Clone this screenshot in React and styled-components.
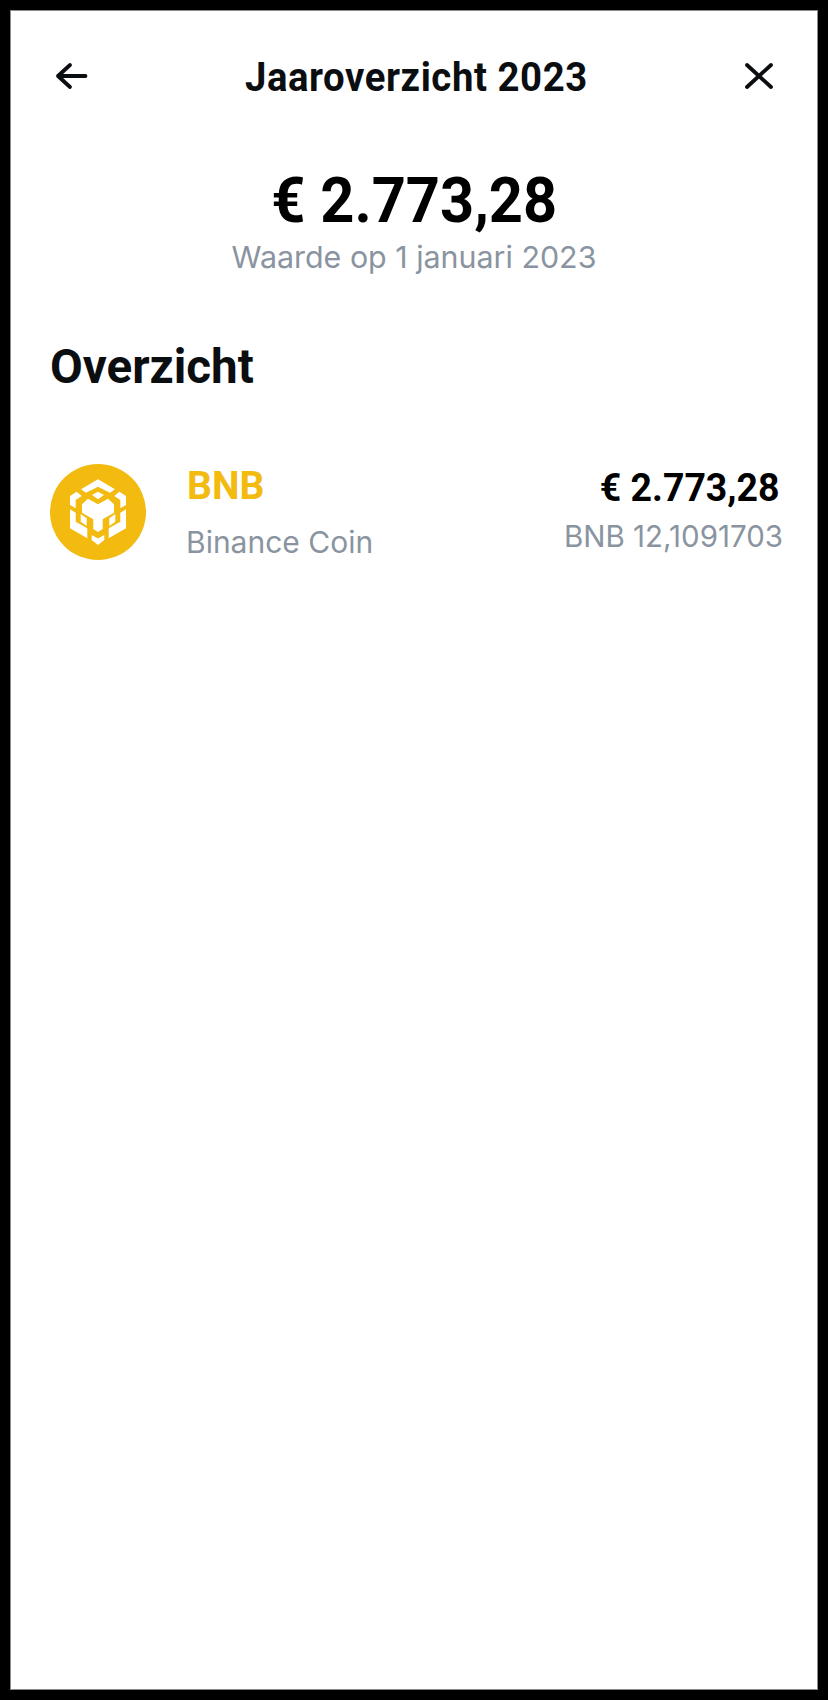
import React from 'react'
import styled, { createGlobalStyle } from 'styled-components'

const GlobalStyle = createGlobalStyle`
  html, body {
    margin: 0;
    padding: 0;
    background-color: black;
  }
`;

const Frame = styled.div`
  box-sizing: border-box;
  width: 828px;
  height: 1700px;
  background-color: black;
  padding: 10px;
`;

const Screen = styled.div`
  box-sizing: border-box;
  height: 100%;
  background-color: white;
  border: 1px solid #8c8c8c;
  padding: 0 34px 0 39px;
  font-family: Inter, sans-serif;
`;

const Header = styled.div`
  display: flex;
  align-items: center;
  justify-content: space-between;
  height: 56px;
  margin-top: 38px;
  padding: 0 4px;
`;

// the heading face in the screenshot is a narrow DIN, so Roboto gets squeezed a bit
const Heading = styled.div`
  font-family: Roboto, sans-serif;
  font-weight: 700;
  transform: scaleX(${(p) => p.$squeeze || 1});
  transform-origin: ${(p) => p.$origin || 'center'};
  white-space: nowrap;
`;

const HeaderTitle = styled(Heading)`
  font-size: 41px;
  letter-spacing: 0.6px;
  color: #0b0e11;
`;

const IconButton = styled.div`
  display: flex;
  width: 36px;
  height: 36px;
  align-items: center;
  justify-content: center;
`;

const Total = styled.div`
  display: flex;
  flex-direction: column;
  align-items: center;
  margin-top: 61px;
  padding-right: 5px;
`;

const TotalValue = styled(Heading)`
  font-size: 63px;
  line-height: 70px;
  color: black;
`;

const TotalLabel = styled.div`
  margin-top: 1px;
  font-size: 30.4px;
  line-height: 40px;
  color: #8a94a0;
`;

const SectionTitle = styled(Heading)`
  margin-top: 62px;
  font-size: 48px;
  line-height: 56px;
  color: #0b0e11;
`;

const CoinRow = styled.div`
  display: flex;
  align-items: center;
  margin-top: 67px;
`;

const CoinIcon = styled.div`
  width: 96px;
  height: 96px;
  flex-shrink: 0;
`;

const CoinInfo = styled.div`
  flex: 1;
  display: flex;
  flex-direction: column;
  gap: 15px;
  margin: 2px 0 0 40px;
`;

const CoinAmounts = styled.div`
  display: flex;
  flex-direction: column;
  align-items: flex-end;
  gap: 8px;
  margin-bottom: 3px;
`;

const CoinSymbol = styled(Heading)`
  padding-left: 1px;
  font-size: 39px;
  line-height: 44px;
  color: #f3ba0f;
`;

const CoinName = styled.div`
  font-size: 30px;
  line-height: 38px;
  color: #8a94a0;
`;

const CoinValue = styled(Heading)`
  padding-right: 4px;
  font-size: 38px;
  line-height: 44px;
  color: black;
`;

const CoinBalance = styled.div`
  font-size: 29.5px;
  line-height: 36px;
  color: #8a94a0;
`;

const BackIcon = () => (
  <svg width="36" height="36" viewBox="0 0 36 36" fill="none" stroke="#0b0e11" strokeWidth="3.8" strokeLinecap="round" strokeLinejoin="round">
    <path d="M31.500 17H4M16 6L4 17l12 11" />
  </svg>
)

const CloseIcon = () => (
  <svg width="36" height="36" viewBox="0 0 36 36" fill="none" stroke="#0b0e11" strokeWidth="3.8" strokeLinecap="round">
    <path d="M4 6l24 22M28 6L4 28" />
  </svg>
)

const BnbLogo = () => (
  <svg width="96" height="96" viewBox="0 0 96 96">
    <circle cx="48" cy="48" r="48" fill="#f3ba0f" />
    <g fill="white">
      <path d="M48 15.300L65 25.300 60 28.700 48 22.700 36 28.700 31 25.300z" />
      <path d="M48 27.700L54 31 48 35.300 42 31z" />
      <path d="M26.700 27.700L31.700 32 25.700 36V44.300L20 41V32z" />
      <path d="M69.300 27.700L64.300 32 70.300 36V44.300L76 41V32z" />
      <path d="M32 40.300L38 34.700 48 40.300 58 34.700 64 40.300V48.700L52.700 55.300V65L48 68 43.300 65V55.300L32 48.700z" />
      <path d="M20 45.300L25.700 48.700V57.700L37.300 64.300V74.300L20 64.300z" />
      <path d="M76 45.300L70.300 48.700V57.700L58.700 64.300V74.300L76 64.300z" />
      <path d="M30.700 50L36.700 54.300V62L30.700 57.700z" />
      <path d="M65.300 50L59.300 54.300V62L65.300 57.700z" />
      <path d="M41.700 71L48 74.500 54.300 71V76L48 81 41.700 76z" />
    </g>
  </svg>
)

const App = () => {
  return (
    <Frame>
      <GlobalStyle />
      <Screen>
        <Header>
          <IconButton><BackIcon /></IconButton>
          <HeaderTitle $squeeze={0.935}>Jaaroverzicht 2023</HeaderTitle>
          <IconButton><CloseIcon /></IconButton>
        </Header>

        <Total>
          <TotalValue $squeeze={0.945}>€ 2.773,28</TotalValue>
          <TotalLabel>Waarde op 1 januari 2023</TotalLabel>
        </Total>

        <SectionTitle $squeeze={0.99} $origin="left">Overzicht</SectionTitle>

        <CoinRow>
          <CoinIcon><BnbLogo /></CoinIcon>
          <CoinInfo>
            <CoinSymbol $origin="left">BNB</CoinSymbol>
            <CoinName>Binance Coin</CoinName>
          </CoinInfo>
          <CoinAmounts>
            <CoinValue $squeeze={0.985} $origin="right">€ 2.773,28</CoinValue>
            <CoinBalance>BNB 12,1091703</CoinBalance>
          </CoinAmounts>
        </CoinRow>
      </Screen>
    </Frame>
  )
}

export default App
